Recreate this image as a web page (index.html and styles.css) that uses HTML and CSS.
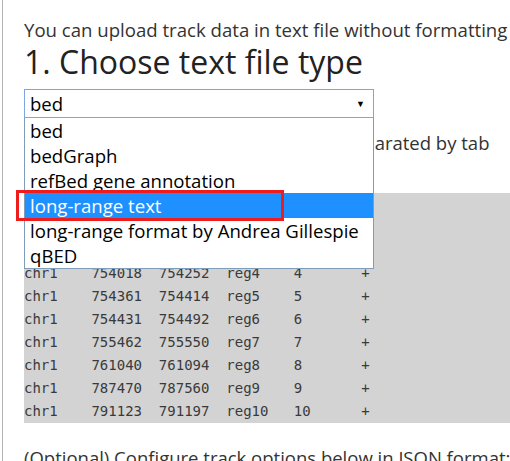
FILE: index.html
```html
<!DOCTYPE html>
<html>
<head>
<meta charset="utf-8">
<link rel="stylesheet" href="styles.css">
</head>
<body>
<div class="frame">
  <div class="page">
    <p class="intro">You can upload track data in text file without formatting to a specific format.</p>
    <h1 class="title">1. Choose text file type</h1>
    <div class="picker">
      <div class="select">
        <span>bed</span>
        <span class="caret">▼</span>
      </div>
      <ul class="options">
        <li class="opt">bed</li>
        <li class="opt">bedGraph</li>
        <li class="opt">refBed gene annotation</li>
        <li class="opt active">long-range text<span class="mark"></span></li>
        <li class="opt">long-range format by Andrea Gillespie</li>
        <li class="opt">qBED</li>
      </ul>
    </div>
    <p class="note">The text file should contain columns separated by tab</p>
    <pre class="sample">chr1	752566	752692	reg1	1	+
chr1	752751	753211	reg2	2	+
chr1	753374	753883	reg3	3	+
chr1	754018	754252	reg4	4	+
chr1	754361	754414	reg5	5	+
chr1	754431	754492	reg6	6	+
chr1	755462	755550	reg7	7	+
chr1	761040	761094	reg8	8	+
chr1	787470	787560	reg9	9	+
chr1	791123	791197	reg10	10	+</pre>
    <p class="optional">(Optional) Configure track options below in JSON format:</p>
  </div>
</div>
</body>
</html>
```

FILE: styles.css
```css
html, body {
  margin: 0;
  padding: 0;
  background: #ffffff;
  overflow: hidden;
  height: 461px;
}
.frame {
  margin-left: 2px;
  border-left: 1px solid #b4b4b4;
  height: 461px;
}
.page {
  width: 700px;
  padding: 18px 0 0 21px;
  font-family: "Open Sans", "Noto Sans", sans-serif;
  color: #333333;
}
.intro {
  margin: 0;
  font-size: 18.6px;
  line-height: 24px;
  white-space: nowrap;
}
.title {
  margin: 0;
  font-size: 32px;
  font-weight: 400;
  line-height: 40px;
  color: #222222;
}
.picker {
  position: relative;
  width: 350px;
  margin-top: 7px;
}
.select {
  box-sizing: border-box;
  height: 29px;
  border: 1px solid #7ea6e0;
  display: flex;
  align-items: center;
  justify-content: space-between;
  padding: 0 8px 0 5px;
  font-size: 18.5px;
  color: #000;
}
.caret {
  font-size: 9px;
  color: #000;
}
.options {
  position: absolute;
  top: 29px;
  left: 0;
  width: 350px;
  box-sizing: border-box;
  margin: 0;
  padding: 0;
  list-style: none;
  background: #fff;
  border: 1px solid #7f9db9;
  border-top: none;
  z-index: 2;
}
.opt {
  position: relative;
  height: 25px;
  line-height: 25px;
  padding-left: 5px;
  font-size: 18.6px;
  color: #000;
  white-space: nowrap;
}
.opt.active {
  background: #1e90ff;
  color: #fff;
}
.mark {
  position: absolute;
  left: -9px;
  top: -3px;
  width: 268px;
  height: 31px;
  box-sizing: border-box;
  border: 3px solid #ee1c1c;
}
.note {
  margin: 13px 0 0;
  padding-left: 4px;
  font-size: 18.5px;
  line-height: 24px;
  white-space: nowrap;
}
.sample {
  margin: 38px 0 0;
  background: #d3d3d3;
  font-family: "DejaVu Sans Mono", monospace;
  font-size: 14px;
  line-height: 23px;
  tab-size: 8;
  color: #3a3a3a;
}
.optional {
  margin: 23px 0 0;
  font-size: 18.5px;
  line-height: 24px;
  white-space: nowrap;
}
```
